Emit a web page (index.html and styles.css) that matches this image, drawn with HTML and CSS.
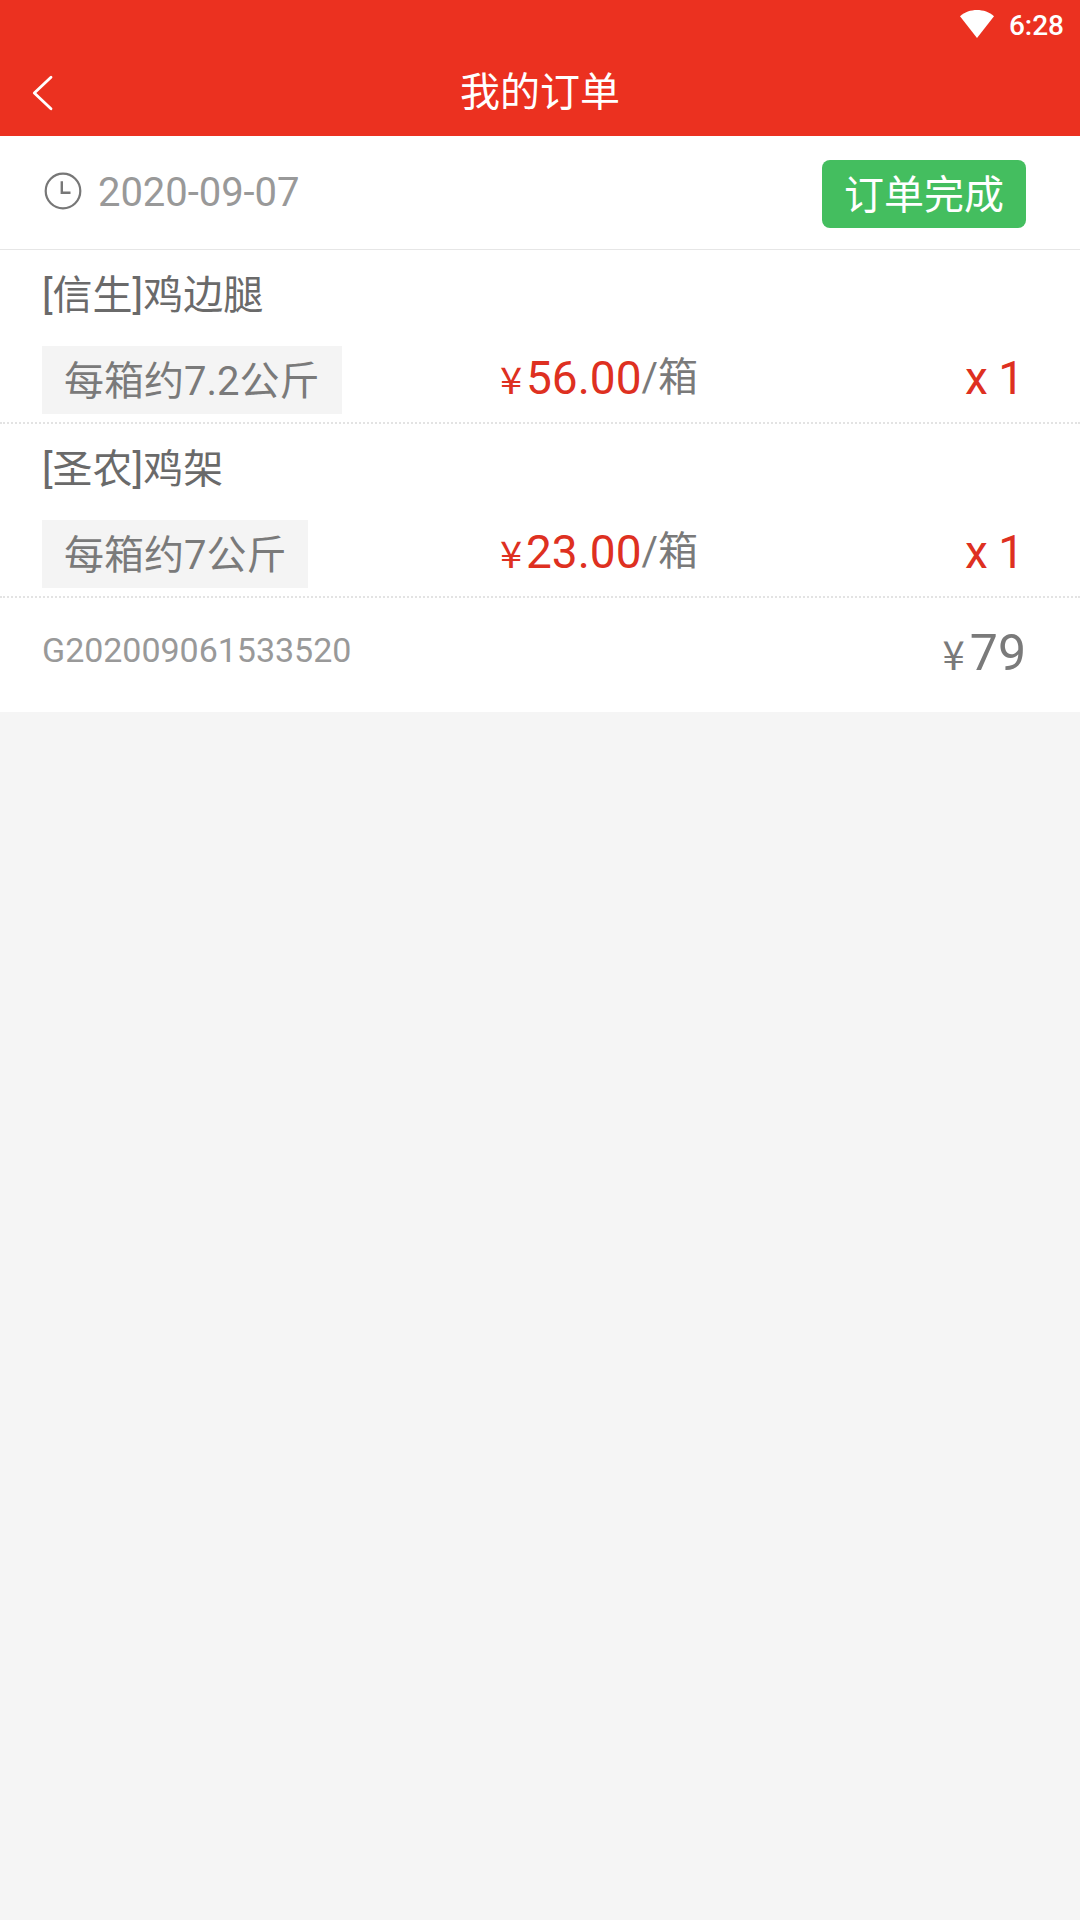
FILE: index.html
```html
<!DOCTYPE html>
<html lang="zh-CN">
<head>
<meta charset="utf-8">
<title>我的订单</title>
<link rel="stylesheet" href="styles.css">
</head>
<body>
<header class="header">
  <div class="status">
    <svg class="wifi" viewBox="0 0 34 28"><path d="M0 6.2C9-2 25-2 34 6.2L17 28Z" fill="#fff"/></svg>
    <span class="time">6:28</span>
  </div>
  <div class="navbar">
    <svg class="back" viewBox="0 0 22 36"><path d="M19 2.2L2.3 18L19 33.8" fill="none" stroke="#fff" stroke-width="2.8" stroke-linecap="round" stroke-linejoin="round"/></svg>
    <h1 class="title">我的订单</h1>
  </div>
</header>
<main class="order">
  <div class="order-head">
    <svg class="clock" viewBox="0 0 38 38"><circle cx="19" cy="19" r="17.3" fill="none" stroke="#777" stroke-width="2.2"/><path d="M17.8 9.2V20.8H26.5" fill="none" stroke="#777" stroke-width="2.4"/></svg>
    <span class="date">2020-09-07</span>
    <span class="badge">订单完成</span>
  </div>
  <section class="item">
    <div class="name">[信生]鸡边腿</div>
    <div class="row">
      <div class="spec-cell"><span class="spec">每箱约7.2公斤</span></div>
      <div class="price"><span class="yen">¥</span><span class="amount">56.00</span><span class="unit">/箱</span></div>
      <div class="qty">x 1</div>
    </div>
  </section>
  <section class="item">
    <div class="name">[圣农]鸡架</div>
    <div class="row">
      <div class="spec-cell"><span class="spec">每箱约7公斤</span></div>
      <div class="price"><span class="yen">¥</span><span class="amount">23.00</span><span class="unit">/箱</span></div>
      <div class="qty">x 1</div>
    </div>
  </section>
  <footer class="order-foot">
    <span class="number">G202009061533520</span>
    <span class="total"><span class="total-yen">¥</span>79</span>
  </footer>
</main>
</body>
</html>
```
FILE: styles.css
```css
* { box-sizing: border-box; }
body { margin: 0; min-height: 1920px; background: #f5f5f5; font-family: Roboto, "Noto Sans CJK SC", sans-serif; color: #6a6a6a; }
.header { height: 136px; background: #eb3120; color: #fff; }
.status { height: 48px; display: flex; justify-content: flex-end; align-items: center; gap: 15px; padding-right: 16px; }
.wifi { width: 34px; height: 28px; }
.time { font-size: 28px; font-weight: 500; line-height: 46px; padding-top: 4px; }
.navbar { height: 88px; display: grid; grid-template-columns: 60px 1fr 60px; align-items: center; }
.back { width: 22px; height: 36px; margin: 2px 0 0 32px; }
.title { margin: 0; padding-top: 2px; text-align: center; font-size: 40px; font-weight: 400; line-height: 86px; }
.order { background: #fff; height: 576px; }
.order-head { height: 114px; display: flex; align-items: center; padding: 1px 54px 0 44px; border-bottom: 1px solid #e6e6e6; }
.clock { width: 38px; height: 38px; margin-top: -5px; }
.date { font-size: 40px; letter-spacing: -0.05px; color: #999; margin-left: 16px; margin-top: -1px; }
.badge { margin-left: auto; margin-top: 1px; width: 204px; height: 68px; line-height: 72px; border-radius: 8px; background: #44be5f; color: #fff; font-size: 40px; text-align: center; }
.item { height: 174px; padding: 0 56px 0 42px; border-bottom: 2px dotted #e3e3e3; }
.name { height: 96px; line-height: 92px; font-size: 40px; }
.row { height: 68px; display: grid; grid-template-columns: 457px 1fr auto; line-height: 68px; }
.spec { display: block; width: max-content; height: 68px; padding: 0 22px; background: #f4f4f4; color: #7a7a7a; font-size: 40px; line-height: 71px; }
.price { display: flex; color: #de3021; white-space: nowrap; height: 65px; align-items: baseline; line-height: 65px; }
.yen, .total-yen { font-family: "Noto Sans CJK SC", sans-serif; }
.yen { width: 27px; font-size: 37px; line-height: 1; padding-left: 1px; transform: scaleX(1.08); transform-origin: left; }
.amount { font-size: 46px; }
.unit { font-size: 40px; line-height: 1; color: #7a7a7a; position: relative; top: -3px; }
.qty { color: #de3021; font-size: 46px; line-height: 65px; word-spacing: -1px; }
.order-foot { height: 114px; display: flex; justify-content: space-between; align-items: center; padding: 0 54px 0 42px; }
.number { font-size: 34px; letter-spacing: -0.03px; color: #999; margin-top: -11px; }
.total { font-size: 50px; line-height: 60px; color: #7a7a7a; margin-top: -5px; }
.total-yen { font-size: 40px; line-height: 1; margin-right: 5px; }
```
